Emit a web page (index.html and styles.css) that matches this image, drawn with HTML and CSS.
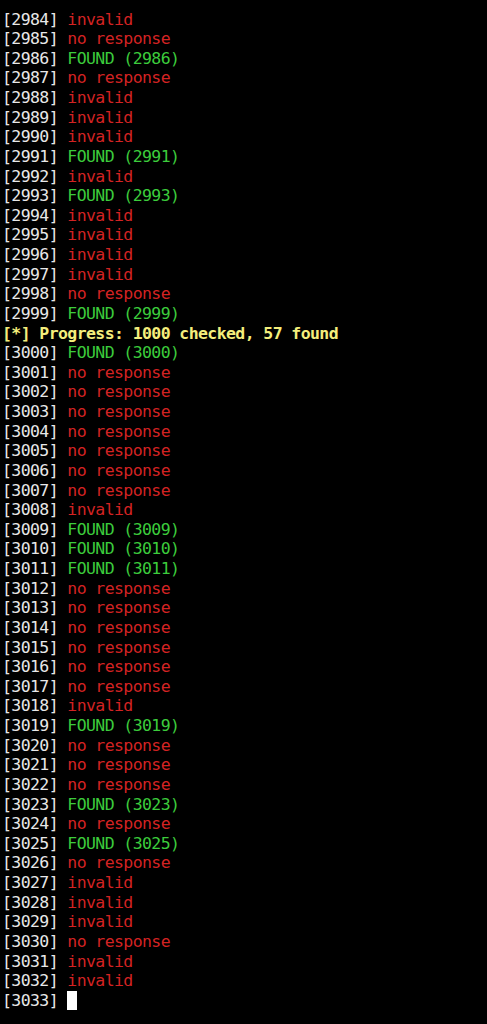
FILE: index.html
```html
<!DOCTYPE html>
<html>
<head>
<meta charset="utf-8">
<link rel="stylesheet" href="styles.css">
</head>
<body>
<div class="term">
<div class="line">[2984] <span class="bad">invalid</span></div>
<div class="line">[2985] <span class="bad">no response</span></div>
<div class="line">[2986] <span class="ok">FOUND (2986)</span></div>
<div class="line">[2987] <span class="bad">no response</span></div>
<div class="line">[2988] <span class="bad">invalid</span></div>
<div class="line">[2989] <span class="bad">invalid</span></div>
<div class="line">[2990] <span class="bad">invalid</span></div>
<div class="line">[2991] <span class="ok">FOUND (2991)</span></div>
<div class="line">[2992] <span class="bad">invalid</span></div>
<div class="line">[2993] <span class="ok">FOUND (2993)</span></div>
<div class="line">[2994] <span class="bad">invalid</span></div>
<div class="line">[2995] <span class="bad">invalid</span></div>
<div class="line">[2996] <span class="bad">invalid</span></div>
<div class="line">[2997] <span class="bad">invalid</span></div>
<div class="line">[2998] <span class="bad">no response</span></div>
<div class="line">[2999] <span class="ok">FOUND (2999)</span></div>
<div class="line progress">[*] Progress: 1000 checked, 57 found</div>
<div class="line">[3000] <span class="ok">FOUND (3000)</span></div>
<div class="line">[3001] <span class="bad">no response</span></div>
<div class="line">[3002] <span class="bad">no response</span></div>
<div class="line">[3003] <span class="bad">no response</span></div>
<div class="line">[3004] <span class="bad">no response</span></div>
<div class="line">[3005] <span class="bad">no response</span></div>
<div class="line">[3006] <span class="bad">no response</span></div>
<div class="line">[3007] <span class="bad">no response</span></div>
<div class="line">[3008] <span class="bad">invalid</span></div>
<div class="line">[3009] <span class="ok">FOUND (3009)</span></div>
<div class="line">[3010] <span class="ok">FOUND (3010)</span></div>
<div class="line">[3011] <span class="ok">FOUND (3011)</span></div>
<div class="line">[3012] <span class="bad">no response</span></div>
<div class="line">[3013] <span class="bad">no response</span></div>
<div class="line">[3014] <span class="bad">no response</span></div>
<div class="line">[3015] <span class="bad">no response</span></div>
<div class="line">[3016] <span class="bad">no response</span></div>
<div class="line">[3017] <span class="bad">no response</span></div>
<div class="line">[3018] <span class="bad">invalid</span></div>
<div class="line">[3019] <span class="ok">FOUND (3019)</span></div>
<div class="line">[3020] <span class="bad">no response</span></div>
<div class="line">[3021] <span class="bad">no response</span></div>
<div class="line">[3022] <span class="bad">no response</span></div>
<div class="line">[3023] <span class="ok">FOUND (3023)</span></div>
<div class="line">[3024] <span class="bad">no response</span></div>
<div class="line">[3025] <span class="ok">FOUND (3025)</span></div>
<div class="line">[3026] <span class="bad">no response</span></div>
<div class="line">[3027] <span class="bad">invalid</span></div>
<div class="line">[3028] <span class="bad">invalid</span></div>
<div class="line">[3029] <span class="bad">invalid</span></div>
<div class="line">[3030] <span class="bad">no response</span></div>
<div class="line">[3031] <span class="bad">invalid</span></div>
<div class="line">[3032] <span class="bad">invalid</span></div>
<div class="line">[3033] <span class="cursor"></span></div>
</div>
</body>
</html>
```

FILE: styles.css
```css
html, body {
  margin: 0;
  padding: 0;
  background: #000;
}
.term {
  padding: 9.5px 0 0 2px;
  font-family: "DejaVu Sans Mono", monospace;
  font-size: 16.5px;
  letter-spacing: -0.6px;
  line-height: 19.64px;
  color: #e8e8e8;
}
.line {
  height: 19.64px;
  white-space: pre;
}
.bad {
  color: #d32323;
}
.ok {
  color: #3ccc3c;
}
.progress {
  color: #f4ee7c;
  font-weight: bold;
}
.cursor {
  display: inline-block;
  width: 10px;
  height: 19px;
  background: #ffffff;
  vertical-align: -4px;
}
```
